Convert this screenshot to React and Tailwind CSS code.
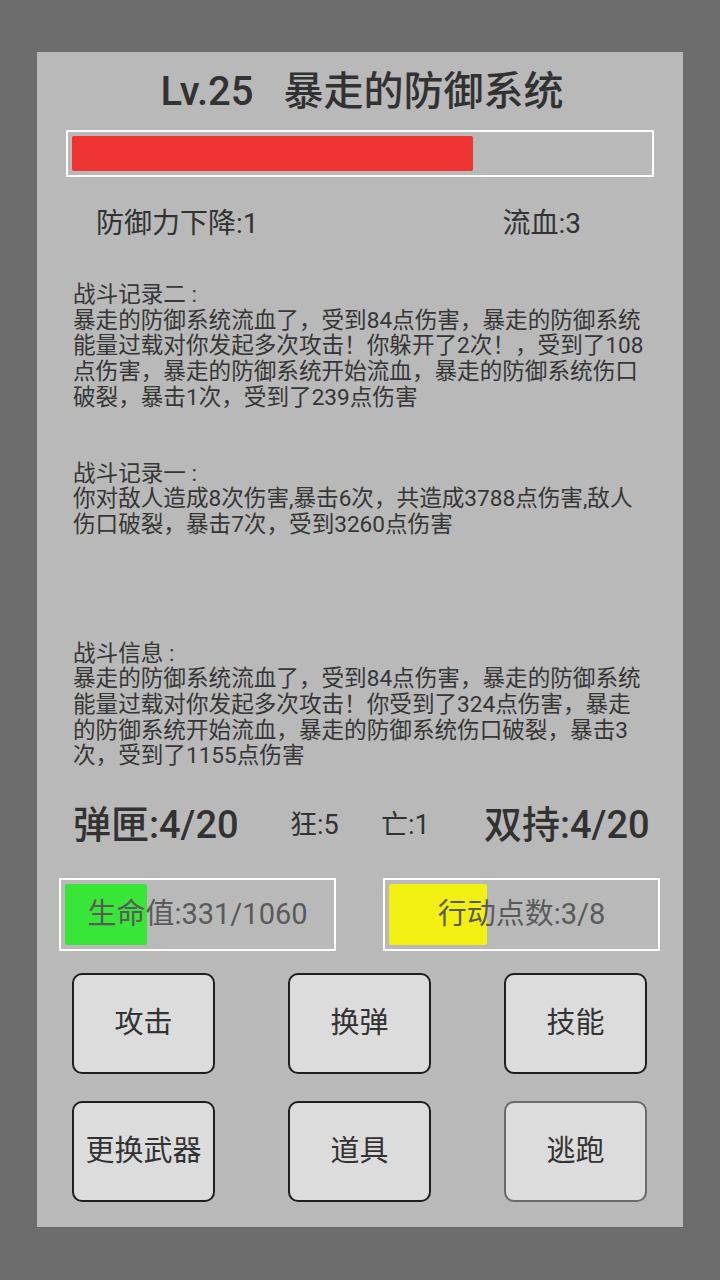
import React from 'react';

const FONT = { fontFamily: 'Roboto, "Noto Sans CJK SC", sans-serif' };

const LOGS = [
  {
    mt: 'mt-[41px]',
    lines: [
      '战斗记录二 :',
      '暴走的防御系统流血了，受到84点伤害，暴走的防御系统',
      '能量过载对你发起多次攻击！你躲开了2次！，受到了108',
      '点伤害，暴走的防御系统开始流血，暴走的防御系统伤口',
      '破裂，暴击1次，受到了239点伤害',
    ],
  },
  {
    mt: 'mt-[50px]',
    lines: [
      '战斗记录一 :',
      '你对敌人造成8次伤害,暴击6次，共造成3788点伤害,敌人',
      '伤口破裂，暴击7次，受到3260点伤害',
    ],
  },
  {
    mt: 'mt-[103px]',
    lines: [
      '战斗信息 :',
      '暴走的防御系统流血了，受到84点伤害，暴走的防御系统',
      '能量过载对你发起多次攻击！你受到了324点伤害，暴走',
      '的防御系统开始流血，暴走的防御系统伤口破裂，暴击3',
      '次，受到了1155点伤害',
    ],
  },
];

const BUTTONS = [
  ['攻击', '换弹', '技能'],
  ['更换武器', '道具', '逃跑'],
];

const StatBar = ({ label, fill, width }) => (
  <div className="relative w-[277px] h-[73px] border-2 border-white">
    <div className={`absolute left-[4px] top-[4px] bottom-[4px] rounded-[2px] ${fill}`} style={{ width }} />
    <div className="relative h-full flex items-center justify-center text-[29px] text-[#5a5a5a]">
      {label}
    </div>
  </div>
);

export default function App() {
  return (
    <div className="w-[720px] h-[1280px] bg-[#6d6d6d] pt-[52px] pl-[37px]" style={FONT}>
      <div className="w-[646px] h-[1175px] bg-[#b9b9b9] flex flex-col text-[#323232]">
        {/* 标题 */}
        <div className="mt-[16px] h-[48px] leading-[48px] text-[40px] font-medium text-center whitespace-pre pl-[4px]">
          {'Lv.25   暴走的防御系统'}
        </div>

        {/* 血条 */}
        <div className="mt-[14px] ml-[29px] w-[588px] h-[47px] border-2 border-white p-[4px]">
          <div className="h-full w-[401px] bg-[#ef3434] rounded-[2px]" />
        </div>

        {/* 状态 */}
        <div className="mt-[30px] h-[34px] leading-[34px] text-[28px] flex justify-between pl-[59px] pr-[102px]">
          <span>防御力下降:1</span>
          <span>流血:3</span>
        </div>

        {/* 战斗记录 */}
        {LOGS.map((log, i) => (
          <div key={i} className={`${log.mt} pl-[36px] text-[22.6px] leading-[25.7px] text-[#363636]`}>
            {log.lines.map((l, j) => (
              <div key={j} className="whitespace-nowrap">{l}</div>
            ))}
          </div>
        ))}

        {/* 弹匣 */}
        <div className="mt-[33px] h-[46px] flex items-center pl-[36px]">
          <span className="text-[38px] font-medium w-[217px]">弹匣:4/20</span>
          <span className="text-[27px] w-[91px]">狂:5</span>
          <span className="text-[27px] w-[103px]">亡:1</span>
          <span className="text-[38px] font-medium">双持:4/20</span>
        </div>

        {/* 生命/行动 */}
        <div className="mt-[30px] pl-[22px] flex gap-[47px]">
          <StatBar label="生命值:331/1060" fill="bg-[#38e638]" width={82} />
          <StatBar label="行动点数:3/8" fill="bg-[#f1f011]" width={98} />
        </div>

        {/* 操作按钮 */}
        <div className="mt-[22px] pl-[35px] flex flex-col gap-[27px]">
          {BUTTONS.map((row, i) => (
            <div key={i} className="flex gap-[73px]">
              {row.map((b) => (
                <button
                  key={b}
                  className={`w-[143px] h-[101px] rounded-[10px] bg-[#dcdcdc] border-2 text-[29px] text-[#333333] flex items-center justify-center ${b === '逃跑' ? 'border-[#6a6a6a] bg-[#d4d4d4]' : 'border-[#1e1e1e]'}`}
                >
                  {b}
                </button>
              ))}
            </div>
          ))}
        </div>
      </div>
    </div>
  );
}
